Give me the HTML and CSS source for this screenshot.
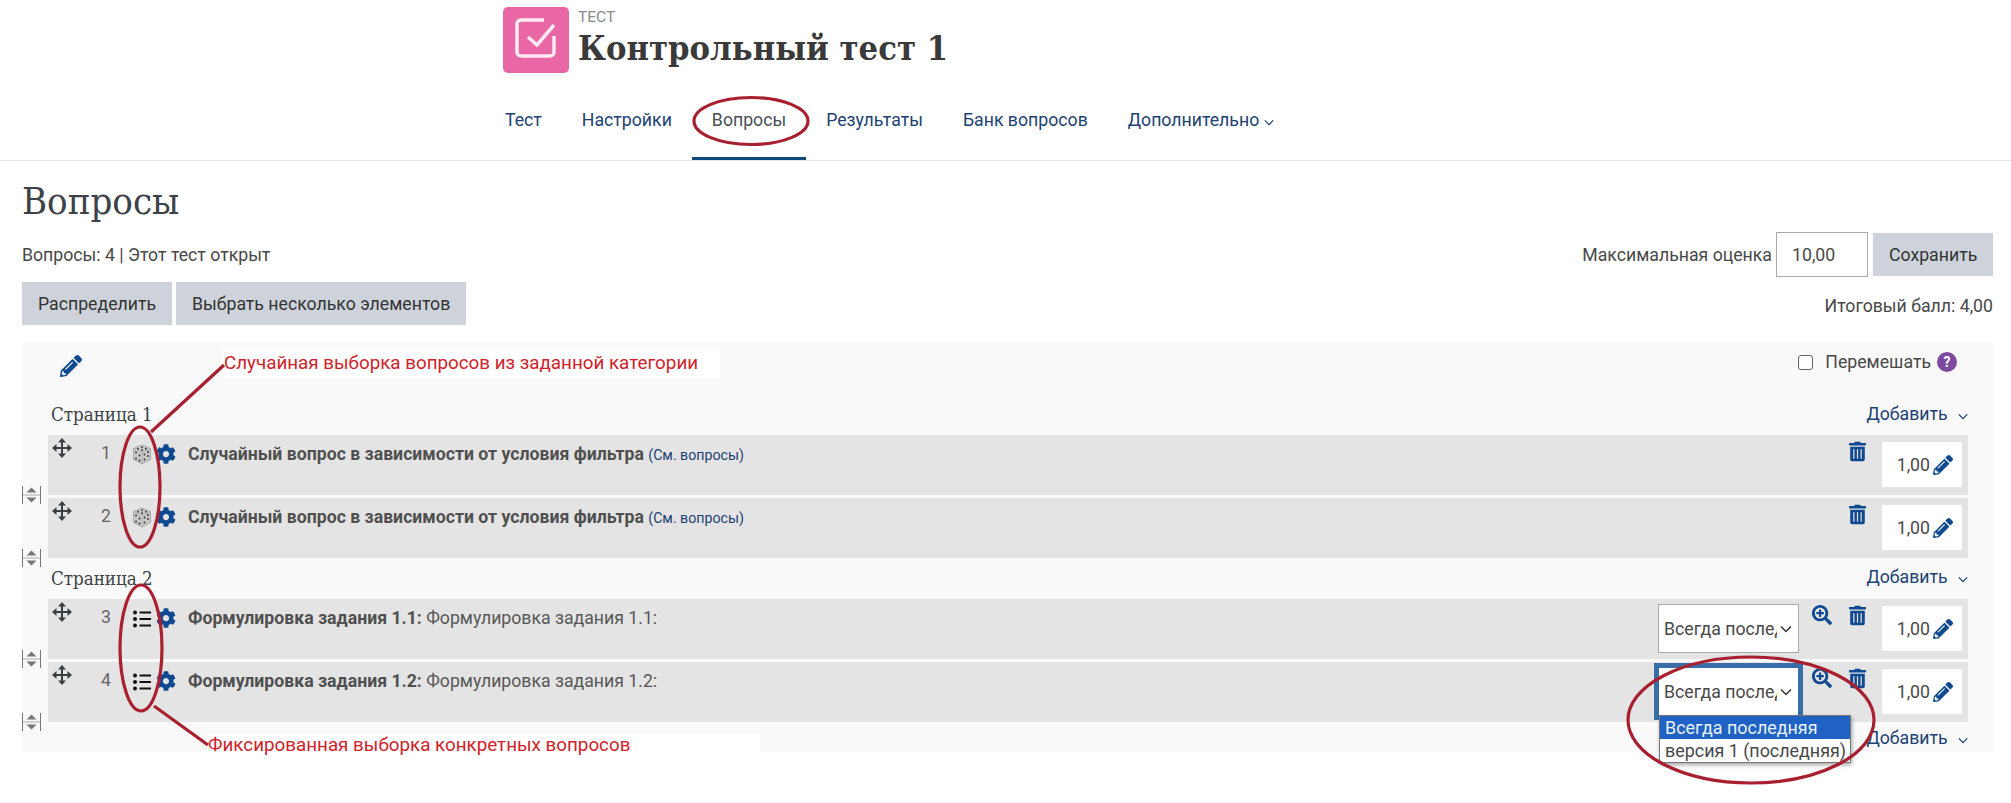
FILE: index.html
```html
<!DOCTYPE html>
<html lang="ru">
<head>
    <meta charset="UTF-8">
    <title>Контрольный тест 1</title>
    <link rel="stylesheet" href="styles.css">
</head>
<body>

<!-- Icon set -->
<svg class="icon-defs" width="0" height="0">
    <symbol id="i-move" viewBox="0 0 20 20"><path d="M10 0l4 4.5h-3V9h4.5V6l4.5 4-4.5 4v-3H11v4.5h3L10 20l-4-4.5h3V11H4.5v3L0 10l4.500-4v3H9V4.5H6z"/></symbol>
    <symbol id="i-cog" viewBox="0 0 512 512"><path d="M487.4 315.7l-42.6-24.6c4.3-23.2 4.3-47 0-70.2l42.6-24.6c4.9-2.8 7.1-8.6 5.5-14-11.1-35.6-30-67.8-54.7-94.6-3.8-4.1-10-5.1-14.8-2.3L380.8 110c-17.9-15.4-38.5-27.3-60.8-35.1V25.8c0-5.6-3.9-10.5-9.4-11.7-36.7-8.2-74.3-7.8-109.2 0-5.5 1.2-9.4 6.1-9.4 11.7V75c-22.2 7.9-42.8 19.8-60.8 35.1L88.7 85.5c-4.9-2.8-11-1.9-14.8 2.3-24.7 26.7-43.6 58.9-54.7 94.6-1.7 5.4.6 11.2 5.5 14L67.3 221c-4.3 23.2-4.3 47 0 70.2l-42.6 24.6c-4.9 2.8-7.1 8.6-5.5 14 11.1 35.6 30 67.8 54.7 94.6 3.8 4.1 10 5.1 14.8 2.3l42.6-24.6c17.9 15.4 38.5 27.3 60.8 35.1v49.2c0 5.6 3.9 10.5 9.4 11.7 36.7 8.2 74.3 7.8 109.2 0 5.5-1.2 9.4-6.1 9.4-11.7v-49.2c22.2-7.9 42.8-19.8 60.8-35.1l42.6 24.6c4.9 2.8 11 1.9 14.8-2.3 24.7-26.7 43.6-58.9 54.7-94.6 1.5-5.5-.7-11.3-5.6-14.1zM256 336c-44.1 0-80-35.9-80-80s35.9-80 80-80 80 35.9 80 80-35.9 80-80 80z"/></symbol>
    <symbol id="i-pencil" viewBox="0 0 512 512"><path d="M497.9 142.1l-46.1 46.1c-4.7 4.7-12.3 4.7-17 0l-111-111c-4.7-4.7-4.7-12.3 0-17l46.1-46.1c18.7-18.7 49.1-18.7 67.9 0l60.1 60.1c18.8 18.7 18.8 49.1 0 67.9zM284.2 99.8L21.6 362.4.4 483.9c-2.9 16.4 11.4 30.6 27.8 27.8l121.5-21.3 262.6-262.6c4.7-4.7 4.7-12.3 0-17l-111-111c-4.8-4.7-12.4-4.7-17.1 0zM124.1 339.9c-5.5-5.5-5.5-14.3 0-19.8l154-154c5.5-5.5 14.3-5.5 19.8 0s5.5 14.3 0 19.8l-154 154c-5.5 5.5-14.3 5.5-19.8 0zM88 424h48v36.3l-64.5 11.3-31.1-31.1L51.7 376H88v48z"/></symbol>
    <symbol id="i-trash" viewBox="0 0 448 512"><path d="M32 464a48 48 0 0 0 48 48h288a48 48 0 0 0 48-48V128H32zm272-256a16 16 0 0 1 32 0v224a16 16 0 0 1-32 0zm-96 0a16 16 0 0 1 32 0v224a16 16 0 0 1-32 0zm-96 0a16 16 0 0 1 32 0v224a16 16 0 0 1-32 0zM432 32H312l-9.4-18.7A24 24 0 0 0 281.1 0H166.8a23.72 23.72 0 0 0-21.4 13.3L136 32H16A16 16 0 0 0 0 48v32a16 16 0 0 0 16 16h416a16 16 0 0 0 16-16V48a16 16 0 0 0-16-16z"/></symbol>
    <symbol id="i-search" viewBox="0 0 512 512"><path d="M304 192v32c0 6.6-5.4 12-12 12h-56v56c0 6.6-5.4 12-12 12h-32c-6.6 0-12-5.4-12-12v-56h-56c-6.6 0-12-5.4-12-12v-32c0-6.6 5.4-12 12-12h56v-56c0-6.6 5.4-12 12-12h32c6.6 0 12 5.4 12 12v56h56c6.6 0 12 5.4 12 12zm201 284.7L476.7 505c-9.4 9.4-24.6 9.4-33.9 0L343 405.3c-4.5-4.5-7-10.6-7-17V372c-35.3 27.6-79.7 44-128 44C93.1 416 0 322.9 0 208S93.1 0 208 0s208 93.1 208 208c0 48.3-16.4 92.7-44 128h16.3c6.4 0 12.5 2.5 17 7l99.7 99.7c9.3 9.4 9.3 24.6 0 34zM344 208c0-75.2-60.8-136-136-136S72 132.8 72 208s60.8 136 136 136 136-60.8 136-136z"/></symbol>
    <symbol id="i-dice" viewBox="0 0 20 20">
        <path d="M10 .5l8.500 3.500v11L10 19.500 1.500 15V4z" fill="#c9c9c9" stroke="#8a8a8a" stroke-width=".6"/>
        <path d="M1.500 4L10 8l8.500-4M10 8v11.500" fill="none" stroke="#a5a5a5" stroke-width=".6"/>
        <g fill="#2b2b2b">
            <circle cx="10" cy="2.800" r=".9"/><circle cx="6" cy="4.200" r=".9"/><circle cx="14" cy="4.200" r=".9"/><circle cx="10" cy="5.700" r=".9"/>
            <circle cx="4" cy="8" r=".9"/><circle cx="7.500" cy="11" r=".9"/><circle cx="4" cy="14" r=".9"/><circle cx="7.500" cy="16" r=".9"/>
            <circle cx="16" cy="7.500" r=".9"/><circle cx="12.500" cy="10" r=".9"/><circle cx="16" cy="11.500" r=".9"/><circle cx="12.500" cy="15" r=".9"/>
        </g>
    </symbol>
    <symbol id="i-list" viewBox="0 0 18 18">
        <circle cx="2" cy="2.500" r="2"/><circle cx="2" cy="9" r="2"/><circle cx="2" cy="15.500" r="2"/>
        <path d="M6.500 1.500H18v2H6.500zM6.500 8H18v2H6.500zM6.500 14.500H18v2H6.500z"/>
    </symbol>
    <symbol id="i-gap" viewBox="0 0 19 18">
        <path d="M.5 0v18M18.500 0v18" fill="none" stroke="#777" stroke-width="1"/>
        <path d="M1 8.500h17v1H1z" fill="#aaa"/>
        <path d="M9.500 1.500l5 5h-10zM9.500 16.500l5-5h-10z" fill="#777"/>
    </symbol>
    <symbol id="i-chevron" viewBox="0 0 12 8"><path d="M1 1.500l5 5 5-5" fill="none" stroke="currentColor" stroke-width="1.500"/></symbol>
</svg>

<!-- Course header -->
<header class="page-header">
    <div class="activity-head">
        <div class="activity-icon">
            <svg viewBox="0 0 66 66" width="66" height="66">
                <path d="M41 13H18a4 4 0 0 0-4 4v28a4 4 0 0 0 4 4h29a4 4 0 0 0 4-4V29" fill="none" stroke="#fdeaf3" stroke-width="3.500"/>
                <path d="M25 30l9 8 17-20" fill="none" stroke="#fdeaf3" stroke-width="3.500"/>
            </svg>
        </div>
        <div class="activity-title">
            <div class="activity-type">ТЕСТ</div>
            <div class="activity-name">Контрольный тест 1</div>
        </div>
    </div>
    <nav class="tabs">
        <a href="#" class="tab">Тест</a>
        <a href="#" class="tab">Настройки</a>
        <a href="#" class="tab active">Вопросы</a>
        <a href="#" class="tab">Результаты</a>
        <a href="#" class="tab">Банк вопросов</a>
        <a href="#" class="tab">Дополнительно <svg class="chevron-small"><use href="#i-chevron"/></svg></a>
    </nav>
</header>

<main class="content">
    <h1>Вопросы</h1>

    <div class="toolbar">
        <div>Вопросы: 4 | Этот тест открыт</div>
        <div class="grade-form">
            <span class="grade-label">Максимальная оценка</span>
            <div class="grade-input">10,00</div>
            <button class="btn btn-save">Сохранить</button>
        </div>
    </div>

    <div class="toolbar toolbar-second">
        <div class="btn-group">
            <button class="btn">Распределить</button>
            <button class="btn">Выбрать несколько элементов</button>
        </div>
        <div class="total">Итоговый балл: 4,00</div>
    </div>

    <section class="panel">
        <div class="panel-top">
            <svg class="icon icon-edit"><use href="#i-pencil"/></svg>
            <div class="shuffle">
                <span class="checkbox"></span>
                <span>Перемешать</span>
                <span class="help">?</span>
            </div>
        </div>

        <div class="page-row">
            <span class="page-name">Страница 1</span>
            <a href="#" class="add-link">Добавить <svg class="chevron-small"><use href="#i-chevron"/></svg></a>
        </div>

        <div class="slots">
            <div class="slot">
                <svg class="icon icon-move"><use href="#i-move"/></svg>
                <span class="slot-num">1</span>
                <svg class="icon icon-type"><use href="#i-dice"/></svg>
                <svg class="icon icon-cog"><use href="#i-cog"/></svg>
                <div class="slot-text"><b>Случайный вопрос в зависимости от условия фильтра</b> <a href="#" class="see-link">(См. вопросы)</a></div>
                <div class="slot-actions">
                    <svg class="icon icon-trash"><use href="#i-trash"/></svg>
                    <div class="score">1,00<svg class="icon icon-score"><use href="#i-pencil"/></svg></div>
                </div>
                <svg class="icon icon-gap"><use href="#i-gap"/></svg>
            </div>
            <div class="slot">
                <svg class="icon icon-move"><use href="#i-move"/></svg>
                <span class="slot-num">2</span>
                <svg class="icon icon-type"><use href="#i-dice"/></svg>
                <svg class="icon icon-cog"><use href="#i-cog"/></svg>
                <div class="slot-text"><b>Случайный вопрос в зависимости от условия фильтра</b> <a href="#" class="see-link">(См. вопросы)</a></div>
                <div class="slot-actions">
                    <svg class="icon icon-trash"><use href="#i-trash"/></svg>
                    <div class="score">1,00<svg class="icon icon-score"><use href="#i-pencil"/></svg></div>
                </div>
                <svg class="icon icon-gap"><use href="#i-gap"/></svg>
            </div>
        </div>

        <div class="page-row page-row-next">
            <span class="page-name">Страница 2</span>
            <a href="#" class="add-link">Добавить <svg class="chevron-small"><use href="#i-chevron"/></svg></a>
        </div>

        <div class="slots">
            <div class="slot">
                <svg class="icon icon-move"><use href="#i-move"/></svg>
                <span class="slot-num">3</span>
                <svg class="icon icon-list"><use href="#i-list"/></svg>
                <svg class="icon icon-cog"><use href="#i-cog"/></svg>
                <div class="slot-text"><b>Формулировка задания 1.1:</b> Формулировка задания 1.1:</div>
                <div class="slot-actions">
                    <div class="version-select">
                        <span class="version-value">Всегда последняя</span>
                        <svg class="version-arrow"><use href="#i-chevron"/></svg>
                    </div>
                    <svg class="icon icon-search"><use href="#i-search"/></svg>
                    <svg class="icon icon-trash"><use href="#i-trash"/></svg>
                    <div class="score">1,00<svg class="icon icon-score"><use href="#i-pencil"/></svg></div>
                </div>
                <svg class="icon icon-gap"><use href="#i-gap"/></svg>
            </div>
            <div class="slot">
                <svg class="icon icon-move"><use href="#i-move"/></svg>
                <span class="slot-num">4</span>
                <svg class="icon icon-list"><use href="#i-list"/></svg>
                <svg class="icon icon-cog"><use href="#i-cog"/></svg>
                <div class="slot-text"><b>Формулировка задания 1.2:</b> Формулировка задания 1.2:</div>
                <div class="slot-actions">
                    <div class="version-select focused">
                        <span class="version-value">Всегда последняя</span>
                        <svg class="version-arrow"><use href="#i-chevron"/></svg>
                        <ul class="version-menu">
                            <li class="selected">Всегда последняя</li>
                            <li>версия 1 (последняя)</li>
                        </ul>
                    </div>
                    <svg class="icon icon-search"><use href="#i-search"/></svg>
                    <svg class="icon icon-trash"><use href="#i-trash"/></svg>
                    <div class="score">1,00<svg class="icon icon-score"><use href="#i-pencil"/></svg></div>
                </div>
                <svg class="icon icon-gap"><use href="#i-gap"/></svg>
            </div>
        </div>

        <div class="page-row page-row-last">
            <a href="#" class="add-link">Добавить <svg class="chevron-small"><use href="#i-chevron"/></svg></a>
        </div>
    </section>
</main>

<!-- Red notes drawn over the screenshot -->
<div class="note note-random">Случайная выборка вопросов из заданной категории</div>
<div class="note note-fixed">Фиксированная выборка конкретных вопросов</div>
<svg class="marks" width="2011" height="803" viewBox="0 0 2011 803">
    <ellipse cx="751" cy="121" rx="57" ry="23.500"/>
    <ellipse cx="140" cy="487" rx="20" ry="60"/>
    <ellipse cx="141" cy="648" rx="21" ry="63"/>
    <ellipse cx="1751" cy="720" rx="123" ry="63"/>
    <path d="M151 432L224 365"/>
    <path d="M154 706L208 745"/>
</svg>

</body>
</html>
```

FILE: styles.css
```css
body {
    margin: 0;
    min-height: 803px;
    position: relative;
    overflow: hidden;
    background-color: #fff;
    color: #484848;
    font-family: Roboto, "Liberation Sans", sans-serif;
    font-size: 17.7px;
    line-height: 24px;
}
a {
    color: #1d4273;
    text-decoration: none;
}
.icon-defs {
    position: absolute;
}
.icon {
    display: block;
    flex: none;
    fill: #0f4a91;
}

/* Header */
.page-header {
    height: 160px;
    border-bottom: 1px solid #dee2e6;
}
.activity-head {
    display: flex;
    padding: 7px 0 0 503px;
}
.activity-icon {
    width: 66px;
    height: 66px;
    border-radius: 5px;
    background-color: #ea67a6;
}
.activity-title {
    margin-left: 9px;
}
.activity-type {
    margin-top: 2px;
    color: #8a8a8a;
    font-size: 15.5px;
    line-height: 16px;
}
.activity-name {
    margin-top: 2px;
    color: #3a3a3a;
    font-family: "DejaVu Serif Condensed", "DejaVu Serif", serif;
    font-weight: bold;
    font-size: 34.2px;
    line-height: 42px;
}
.tabs {
    display: flex;
    padding-left: 485px;
}
.tab {
    height: 84px;
    padding: 35px 20px 0;
    box-sizing: border-box;
    white-space: nowrap;
}
.tab.active {
    height: 87px;
    color: #495057;
    border-bottom: 3px solid #0f4a7a;
}
.chevron-small {
    width: 10px;
    height: 7px;
}

/* Toolbars */
.content {
    padding: 0 18px 0 22px;
}
h1 {
    margin: 0 0 11px;
    padding-top: 20px;
    color: #3c4248;
    font-family: "DejaVu Serif Condensed", "DejaVu Serif", serif;
    font-weight: normal;
    font-size: 38px;
    line-height: 40px;
}
.toolbar {
    display: flex;
    justify-content: space-between;
    align-items: center;
    height: 45px;
}
.toolbar-second {
    height: 43px;
    margin-top: 5px;
}
.grade-form {
    display: flex;
    align-items: center;
}
.grade-label {
    margin-right: 4px;
}
.grade-input {
    width: 92px;
    height: 45px;
    box-sizing: border-box;
    padding: 10px 15px;
    border: 1px solid #aaa;
    background-color: #fff;
}
.btn {
    height: 43px;
    padding: 0 16px;
    border: 0;
    background-color: #ced3db;
    color: #333;
    font-family: inherit;
    font-size: 17.7px;
}
.btn-save {
    width: 120px;
    margin-left: 5px;
}
.btn-group {
    display: flex;
    gap: 4px;
}
.total {
    padding-top: 5px;
}

/* Question panel */
.panel {
    margin-top: 17px;
    background-color: #f9f9f9;
}
.panel-top {
    display: flex;
    justify-content: space-between;
    height: 53px;
    padding: 13px 36px 0 38px;
    box-sizing: border-box;
}
.icon-edit {
    width: 22px;
    height: 22px;
}
.shuffle {
    display: flex;
    align-items: center;
    height: 14px;
}
.checkbox {
    width: 13px;
    height: 13px;
    margin-right: 12px;
    border: 1px solid #666;
    border-radius: 3px;
    background-color: #fff;
}
.help {
    width: 20px;
    height: 20px;
    margin-left: 6px;
    border-radius: 50%;
    background-color: #7d4aa0;
    color: #fff;
    font-size: 14px;
    font-weight: bold;
    line-height: 20px;
    text-align: center;
}
.page-row {
    display: flex;
    justify-content: space-between;
    align-items: center;
    height: 40px;
    padding: 0 25px 0 29px;
}
.page-row-next {
    height: 41px;
}
.page-row-last {
    height: 30px;
    padding-top: 2px;
    box-sizing: border-box;
    justify-content: flex-end;
}
.page-name {
    color: #3c4248;
    font-family: "DejaVu Serif Condensed", "DejaVu Serif", serif;
    font-size: 18.6px;
}
.add-link {
    margin-bottom: 3px;
}
.page-row-last .add-link {
    margin-bottom: 0;
}
.add-link .chevron-small {
    margin-left: 6px;
}
.slots {
    display: flex;
    flex-direction: column;
    gap: 3px;
    margin: 0 25px 0 26px;
}
.slot {
    display: flex;
    align-items: flex-start;
    height: 60px;
    padding: 3px 6px 0 4px;
    box-sizing: border-box;
    position: relative;
    background-color: #e4e4e4;
}
.icon-move {
    width: 20px;
    height: 20px;
    fill: #3a3f44;
}
.slot-num {
    width: 39px;
    margin-top: 3px;
    color: #666;
    text-align: right;
}
.icon-type {
    width: 20px;
    height: 21px;
    margin: 6px 0 0 21px;
}
.icon-list {
    width: 18px;
    height: 18px;
    margin: 8px 1px 0 22px;
    fill: #111;
}
.icon-cog {
    width: 20px;
    height: 20px;
    margin: 6px 0 0 4px;
}
.slot-text {
    margin: 4px 0 0 12px;
    color: #585858;
    letter-spacing: -0.01px;
}
.slot-text b {
    color: #505050;
}
.see-link {
    font-size: 14.2px;
}
.slot-actions {
    display: flex;
    align-items: flex-start;
    margin-left: auto;
}
.icon-gap {
    position: absolute;
    left: -26px;
    bottom: -9px;
    width: 19px;
    height: 18px;
}
.version-select {
    display: flex;
    align-items: center;
    width: 141px;
    height: 49px;
    margin: 2px 13px 0 0;
    padding: 0 5px;
    box-sizing: border-box;
    position: relative;
    border: 1px solid #aaa;
    background-color: #fff;
}
.version-select.focused {
    border-color: #3a6ea8;
    box-shadow: 0 0 0 4px #3a6ea8;
}
.version-value {
    width: 113px;
    overflow: hidden;
    white-space: nowrap;
}
.version-arrow {
    width: 12px;
    height: 8px;
    margin-left: 3px;
    color: #333;
}
.version-menu {
    position: absolute;
    top: 47px;
    left: 0;
    z-index: 2;
    width: 190px;
    margin: 0;
    padding: 0;
    list-style: none;
    border: 1px solid #777;
    background-color: #fff;
    box-shadow: 1px 2px 4px rgba(0,0,0,0.35);
    font-size: 17.9px;
    line-height: 23px;
}
.version-menu li {
    padding-left: 5px;
    white-space: nowrap;
}
.version-menu .selected {
    background-color: #1f62c4;
    color: #e8f2ff;
}
.icon-search {
    width: 20px;
    height: 20px;
    margin: 3px 17px 0 0;
}
.icon-trash {
    width: 17px;
    height: 21px;
    margin: 3px 16px 0 0;
}
.score {
    display: flex;
    align-items: center;
    justify-content: flex-end;
    width: 80px;
    height: 45px;
    margin-top: 4px;
    padding-right: 9px;
    box-sizing: border-box;
    background-color: #fff;
}
.icon-score {
    width: 20px;
    height: 20px;
    margin-left: 3px;
}

/* Notes over the screenshot */
.note {
    position: absolute;
    padding-left: 2px;
    background-color: #fff;
    color: #cf2229;
    font-size: 18.8px;
    line-height: 30px;
}
.note-random {
    top: 348px;
    left: 222px;
    width: 496px;
}
.note-fixed {
    top: 733px;
    left: 206px;
    width: 552px;
    line-height: 24px;
    height: 20px;
}
.marks {
    position: absolute;
    top: 0;
    left: 0;
    z-index: 3;
    pointer-events: none;
    fill: none;
    stroke: #a8202f;
    stroke-width: 3.2;
}
```
